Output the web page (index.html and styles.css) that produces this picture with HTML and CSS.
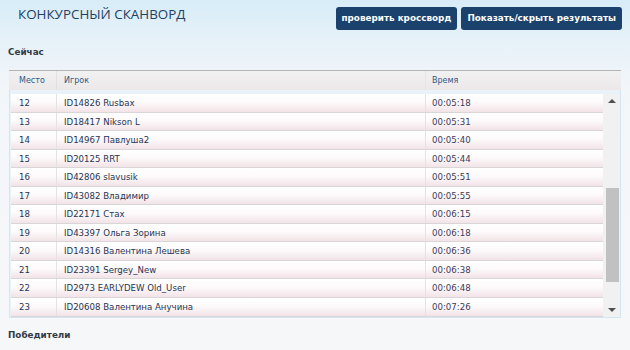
FILE: index.html
```html
<!DOCTYPE html>
<html lang="ru">
<head>
<meta charset="utf-8">
<title>Конкурсный сканворд</title>
<link rel="stylesheet" href="styles.css">
</head>
<body>
<div class="top">
  <h1 class="title">КОНКУРСНЫЙ СКАНВОРД</h1>
  <div class="buttons">
    <button class="btn">проверить кроссворд</button>
    <button class="btn">Показать/скрыть результаты</button>
  </div>
</div>
<h2 class="section now">Сейчас</h2>
<div class="table">
  <div class="thead">
    <div class="c1">Место</div>
    <div class="c2">Игрок</div>
    <div class="c3">Время</div>
  </div>
  <div class="tbody">
    <div class="rows">
      <div class="row"><div class="c1">12</div><div class="c2">ID14826 Rusbax</div><div class="c3">00:05:18</div></div>
      <div class="row"><div class="c1">13</div><div class="c2">ID18417 Nikson L</div><div class="c3">00:05:31</div></div>
      <div class="row"><div class="c1">14</div><div class="c2">ID14967 Павлуша2</div><div class="c3">00:05:40</div></div>
      <div class="row"><div class="c1">15</div><div class="c2">ID20125 RRT</div><div class="c3">00:05:44</div></div>
      <div class="row"><div class="c1">16</div><div class="c2">ID42806 slavusik</div><div class="c3">00:05:51</div></div>
      <div class="row"><div class="c1">17</div><div class="c2">ID43082 Владимир</div><div class="c3">00:05:55</div></div>
      <div class="row"><div class="c1">18</div><div class="c2">ID22171 Стах</div><div class="c3">00:06:15</div></div>
      <div class="row"><div class="c1">19</div><div class="c2">ID43397 Ольга Зорина</div><div class="c3">00:06:18</div></div>
      <div class="row"><div class="c1">20</div><div class="c2">ID14316 Валентина Лешева</div><div class="c3">00:06:36</div></div>
      <div class="row"><div class="c1">21</div><div class="c2">ID23391 Sergey_New</div><div class="c3">00:06:38</div></div>
      <div class="row"><div class="c1">22</div><div class="c2">ID2973 EARLYDEW Old_User</div><div class="c3">00:06:48</div></div>
      <div class="row"><div class="c1">23</div><div class="c2">ID20608 Валентина Анучина</div><div class="c3">00:07:26</div></div>
    </div>
    <div class="scroll">
      <div class="arrow up"></div>
      <div class="track"><div class="thumb"></div></div>
      <div class="arrow down"></div>
    </div>
  </div>
</div>
<h2 class="section winners">Победители</h2>
</body>
</html>
```
FILE: styles.css
```css
html, body {
  margin: 0;
  padding: 0;
}
body {
  width: 630px;
  height: 350px;
  overflow: hidden;
  background: linear-gradient(to bottom, #d8ecf8 0px, #e6f1f8 40px, #f3f6f9 90px, #f6f7f9 100%);
  font-family: "DejaVu Sans", Verdana, sans-serif;
  color: #1f3553;
}
.top {
  display: flex;
  justify-content: space-between;
  align-items: flex-start;
  padding: 7px 8px 0 18px;
  height: 40px;
  box-sizing: border-box;
}
.title {
  margin: 0;
  font-family: "Open Sans", sans-serif;
  font-weight: 400;
  font-size: 13.4px;
  line-height: 14px;
  color: #1d3f63;
}
.buttons {
  display: flex;
  gap: 4px;
}
.btn {
  height: 23px;
  padding: 0 6px;
  border: none;
  border-radius: 3px;
  background: #1b426d;
  color: #ffffff;
  font-family: "DejaVu Sans", Verdana, sans-serif;
  font-weight: bold;
  font-size: 8.8px;
  line-height: 23px;
}
.section {
  margin: 0;
  font-size: 8.8px;
  font-weight: bold;
  color: #333a44;
  padding-left: 8px;
}
.now {
  margin-top: 6px;
  height: 24px;
  line-height: 12px;
}
.winners {
  margin-top: 11px;
  line-height: 12px;
}
.table {
  margin: 0 9px;
  width: 612px;
}
.thead {
  display: flex;
  height: 19px;
  border-top: 1px solid #b4b4b4;
  background: linear-gradient(to bottom, #f1f1f1, #ece8e9);
  font-size: 8px;
  line-height: 20px;
  color: #2d5a86;
}
.thead .c1 {
  width: 48px;
  padding-left: 10px;
  box-sizing: border-box;
  border-right: 1px solid #e2e0e0;
}
.thead .c2 {
  width: 369px;
  padding-left: 7px;
  box-sizing: border-box;
  border-right: 1px solid #e6e4e4;
}
.thead .c3 {
  flex: 1;
  padding-left: 6px;
}
.tbody {
  display: flex;
  border: 1px solid #d4e6f2;
  border-top: none;
  padding-top: 4px;
  background: #e9f2f8;
}
.rows {
  flex: 1;
  padding-left: 1px;
}
.row {
  display: flex;
  height: 17.56px;
  border-bottom: 1px solid #d9d6d7;
  background: linear-gradient(to bottom, #ffffff 0%, #fdfafb 45%, #f2e3e7 100%);
  font-size: 8.6px;
  line-height: 19px;
  color: #1f3553;
}
.row .c1 {
  width: 46px;
  padding-left: 8px;
  box-sizing: border-box;
  border-right: 1px solid #e4e2e2;
}
.row .c2 {
  width: 369px;
  padding-left: 7px;
  box-sizing: border-box;
  border-right: 1px solid #e4e2e2;
}
.row .c3 {
  flex: 1;
  padding-left: 6px;
  color: #3a3b5a;
}
.scroll {
  width: 17px;
  display: flex;
  flex-direction: column;
  background: #f1f1f1;
}
.arrow {
  height: 14px;
  display: flex;
  align-items: center;
  justify-content: center;
}
.arrow.up::before {
  content: "";
  border-left: 4px solid transparent;
  border-right: 4px solid transparent;
  border-bottom: 4px solid #505050;
}
.arrow.down::before {
  content: "";
  border-left: 4px solid transparent;
  border-right: 4px solid transparent;
  border-top: 4px solid #505050;
}
.track {
  flex: 1;
  display: flex;
  flex-direction: column;
  justify-content: flex-end;
  padding: 0 1px 21px 3px;
}
.thumb {
  height: 94px;
  background: #c1c1c1;
}
```
